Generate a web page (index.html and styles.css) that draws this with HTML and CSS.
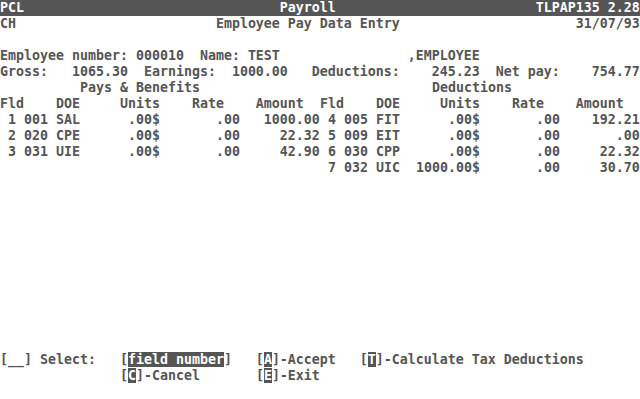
FILE: index.html
```html
<!DOCTYPE html>
<html lang="en">
<head>
  <meta charset="UTF-8" />
  <title>TLPAP135 - Employee Pay Data Entry</title>
  <link rel="stylesheet" href="styles.css">
</head>
<body>
  <div class="screen">
    <div class="line bar">PCL                                Payroll                         TLPAP135 2.28</div>
    <div class="line">CH                         Employee Pay Data Entry                      31/07/93</div>
    <div class="line"> </div>
    <div class="line">Employee number: 000010  Name: TEST                ,EMPLOYEE</div>
    <div class="line">Gross:   1065.30  Earnings:  1000.00   Deductions:    245.23  Net pay:    754.77</div>

    <div class="tables">
      <div class="half">
        <div class="line">          Pays &amp; Benefits</div>
        <div class="line">Fld    DOE     Units    Rate    Amount</div>
        <div class="line"> 1 001 SAL      .00$       .00   1000.00</div>
        <div class="line"> 2 020 CPE      .00$       .00     22.32</div>
        <div class="line"> 3 031 UIE      .00$       .00     42.90</div>
        <div class="line"> </div>
      </div>
      <div class="half">
        <div class="line">              Deductions</div>
        <div class="line">Fld    DOE     Units    Rate    Amount</div>
        <div class="line"> 4 005 FIT      .00$       .00    192.21</div>
        <div class="line"> 5 009 EIT      .00$       .00       .00</div>
        <div class="line"> 6 030 CPP      .00$       .00     22.32</div>
        <div class="line"> 7 032 UIC  1000.00$       .00     30.70</div>
      </div>
    </div>

    <div class="keys">
      <div class="line">[__] Select:   [<span class="inv">field number</span>]   [<span class="inv">A</span>]-Accept   [<span class="inv">T</span>]-Calculate Tax Deductions</div>
      <div class="line">               [<span class="inv">C</span>]-Cancel       [<span class="inv">E</span>]-Exit</div>
    </div>
  </div>
</body>
</html>
```

FILE: styles.css
```css
body {
  margin: 0;
  background: #fff;
}

.screen {
  width: 640px;
  height: 399px;
  overflow: hidden;
  color: #555;
  font-family: "DejaVu Sans Mono", "Liberation Mono", monospace;
  font-weight: bold;
  font-size: 13.29px;
}

.line {
  height: 16px;
  line-height: 16px;
  white-space: pre;
}

.bar {
  background: #555;
  color: #fff;
}

.tables {
  display: grid;
  grid-template-columns: 320px 320px;
}

.keys {
  margin-top: 176px;
}

.inv {
  background: #555;
  color: #fff;
}
```
